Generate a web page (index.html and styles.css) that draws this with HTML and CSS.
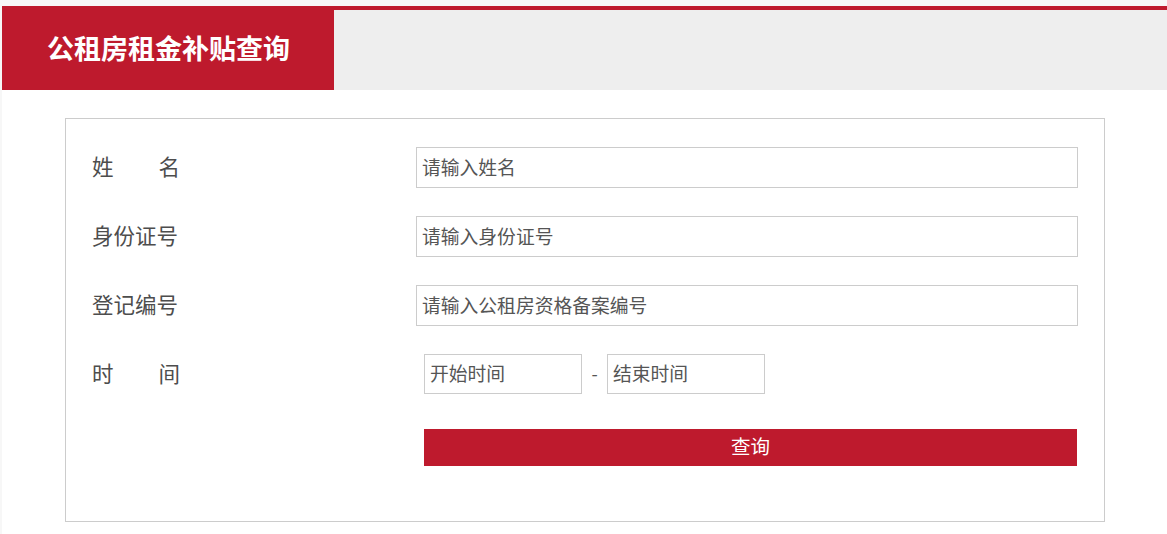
FILE: index.html
```html
<!DOCTYPE html>
<html lang="zh-CN">
<head>
<meta charset="utf-8">
<title>公租房租金补贴查询</title>
<link rel="stylesheet" href="styles.css">
</head>
<body>
<div class="page">
  <div class="header">
    <div class="tab">公租房租金补贴查询</div>
  </div>
  <form class="box">
    <div class="row">
      <label class="label"><span class="just">姓名</span></label>
      <input class="field" type="text" placeholder="请输入姓名">
    </div>
    <div class="row">
      <label class="label">身份证号</label>
      <input class="field" type="text" placeholder="请输入身份证号">
    </div>
    <div class="row">
      <label class="label">登记编号</label>
      <input class="field" type="text" placeholder="请输入公租房资格备案编号">
    </div>
    <div class="row">
      <label class="label"><span class="just">时间</span></label>
      <div class="dates">
        <input class="date" type="text" placeholder="开始时间">
        <span class="dash">-</span>
        <input class="date" type="text" placeholder="结束时间">
      </div>
    </div>
    <div class="row row-btn">
      <span class="label"></span>
      <button class="btn" type="button">查询</button>
    </div>
  </form>
</div>
</body>
</html>
```
FILE: styles.css
```css
html, body {
  margin: 0;
  padding: 0;
}
body {
  background: #f7f7f7;
  font-family: "Noto Sans CJK SC", "Noto Sans", sans-serif;
  color: #4d4d4d;
}
.page {
  margin: 6px 0 0 2px;
  background: #fff;
  height: 528px;
  box-sizing: border-box;
}
.header {
  display: flex;
  height: 84px;
  background: #eeeeee;
  border-top: 4px solid #be1a2d;
  box-sizing: border-box;
}
.tab {
  width: 332px;
  margin-top: -4px;
  height: 84px;
  background: #be1a2d;
  color: #fff;
  font-weight: 700;
  font-size: 27px;
  line-height: 1;
  display: flex;
  align-items: center;
  padding: 0 0 2px 45px;
  box-sizing: border-box;
}
.box {
  width: 1040px;
  height: 404px;
  margin: 28px 0 0 63px;
  border: 1px solid #cccccc;
  box-sizing: border-box;
  padding: 28px 0 0 26px;
}
.row {
  display: flex;
  align-items: center;
  height: 41px;
  margin-bottom: 28px;
}
.label {
  width: 324px;
  flex: none;
  font-size: 21.5px;
  line-height: 1;
  padding-bottom: 4px;
  color: #4d4d4d;
}
.just {
  display: inline-block;
  width: 88px;
  text-align: justify;
  text-align-last: justify;
}
.field {
  width: 662px;
  height: 41px;
  box-sizing: border-box;
  border: 1px solid #cccccc;
  padding: 0 5px 3px;
  font-family: inherit;
  font-size: 18.8px;
  color: #4d4d4d;
  outline: none;
  margin: 0;
}
.field::placeholder,
.date::placeholder {
  color: #555555;
  opacity: 1;
}
.dates {
  display: flex;
  align-items: center;
  align-self: flex-start;
  margin-left: 8px;
}
.date {
  width: 158px;
  height: 40px;
  box-sizing: border-box;
  border: 1px solid #cccccc;
  padding: 0 5px 3px;
  font-family: inherit;
  font-size: 18.8px;
  outline: none;
  margin: 0;
}
.dash {
  width: 25px;
  text-align: center;
  font-size: 18px;
  color: #555;
  padding-bottom: 3px;
}
.row-btn {
  height: 37px;
  margin-top: 34px;
}
.btn {
  margin-left: 8px;
  width: 653px;
  height: 37px;
  border: 0;
  background: #be1a2d;
  color: #fff;
  font-family: inherit;
  font-size: 19.5px;
  line-height: 1;
  padding: 0 0 3px;
  cursor: pointer;
}
```
